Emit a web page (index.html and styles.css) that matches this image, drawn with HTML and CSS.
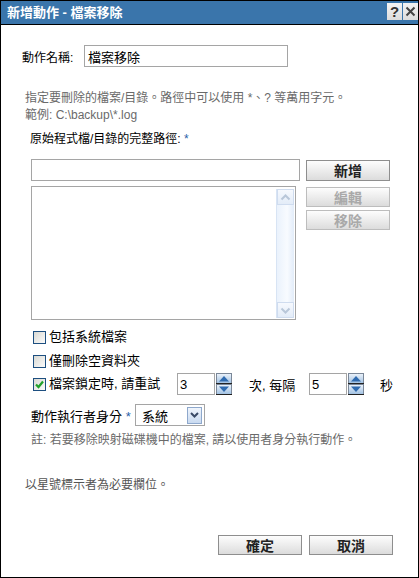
FILE: index.html
```html
<!DOCTYPE html>
<html lang="zh-Hant">
<head>
  <meta charset="UTF-8" />
  <title>新增動作 - 檔案移除</title>
  <link rel="stylesheet" href="styles.css">
</head>
<body>

  <div class="dialog">
    <div class="titlebar">
      <span class="title">新增動作 - 檔案移除</span>
      <div class="title-btns">
        <span class="tbtn">?</span>
        <span class="tbtn">
          <svg width="11" height="11" viewBox="0 0 11 11"><path d="M1.5 1.5 L9.5 9.5 M9.5 1.5 L1.5 9.5" stroke="#444" stroke-width="2"/></svg>
        </span>
      </div>
    </div>

    <div class="content">
      <div class="name-row">
        <span class="name-label">動作名稱:</span>
        <input class="field name-field" type="text" value="檔案移除">
      </div>

      <p class="hint">指定要刪除的檔案/目錄。路徑中可以使用 *、? 等萬用字元。<br>範例: C:\backup\*.log</p>

      <div class="path-label">原始程式檔/目錄的完整路徑: <span class="req">*</span></div>

      <div class="path-row">
        <input class="field path-field" type="text">
        <button class="btn btn-add">新增</button>
      </div>

      <div class="list-row">
        <div class="listbox">
          <div class="list-items"></div>
          <div class="vscroll">
            <span class="sarrow">
              <svg width="11" height="7" viewBox="0 0 11 7"><path d="M1.5 5.5 L5.5 1.5 L9.5 5.5" fill="none" stroke="#b9c7d9" stroke-width="2"/></svg>
            </span>
            <span class="sarrow">
              <svg width="11" height="7" viewBox="0 0 11 7"><path d="M1.5 1.5 L5.5 5.5 L9.5 1.5" fill="none" stroke="#b9c7d9" stroke-width="2"/></svg>
            </span>
          </div>
        </div>
        <div class="side-btns">
          <button class="btn" disabled>編輯</button>
          <button class="btn" disabled>移除</button>
        </div>
      </div>

      <div class="check-row first">
        <span class="cb"></span><span class="cb-label">包括系統檔案</span>
      </div>
      <div class="check-row">
        <span class="cb"></span><span class="cb-label">僅刪除空資料夾</span>
      </div>
      <div class="check-row retry">
        <span class="cb checked">
          <svg width="11" height="11" viewBox="0 0 11 11"><path d="M2 5.5 L4.5 8 L9 2.5" fill="none" stroke="#22a12b" stroke-width="2.2"/></svg>
        </span>
        <span class="cb-label retry-label">檔案鎖定時, 請重試</span>
        <input class="field spin-field" type="text" value="3">
        <span class="spinner">
          <svg width="16" height="22" viewBox="0 0 16 22">
            <defs>
              <linearGradient id="sg" x1="0" y1="0" x2="0" y2="1">
                <stop offset="0" stop-color="#eef4fb"/>
                <stop offset="1" stop-color="#9fc0e2"/>
              </linearGradient>
            </defs>
            <rect x="0.5" y="0.5" width="15" height="10" fill="url(#sg)" stroke="#7a8798"/>
            <rect x="0.5" y="11.5" width="15" height="10" fill="url(#sg)" stroke="#7a8798"/>
            <path d="M3 8.5 L13 8.5 L8 3 Z" fill="#2f6bb0"/>
            <path d="M3 13.5 L13 13.5 L8 19 Z" fill="#2f6bb0"/>
            <path d="M0 10.5 H16 M0 21.5 H16" stroke="#222"/>
          </svg>
        </span>
        <span class="retry-mid">次, 每隔</span>
        <input class="field spin-field" type="text" value="5">
        <span class="spinner">
          <svg width="16" height="22" viewBox="0 0 16 22">
            <rect x="0.5" y="0.5" width="15" height="10" fill="url(#sg)" stroke="#7a8798"/>
            <rect x="0.5" y="11.5" width="15" height="10" fill="url(#sg)" stroke="#7a8798"/>
            <path d="M3 8.5 L13 8.5 L8 3 Z" fill="#2f6bb0"/>
            <path d="M3 13.5 L13 13.5 L8 19 Z" fill="#2f6bb0"/>
            <path d="M0 10.5 H16 M0 21.5 H16" stroke="#222"/>
          </svg>
        </span>
        <span class="retry-end">秒</span>
      </div>

      <div class="exec-row">
        <span class="exec-label">動作執行者身分 <span class="req">*</span></span>
        <div class="select">
          <span class="select-value">系統</span>
          <span class="select-arrow">
            <svg width="9" height="6" viewBox="0 0 9 6"><path d="M1 1 L4.5 4.5 L8 1" fill="none" stroke="#3a4a66" stroke-width="2"/></svg>
          </span>
        </div>
      </div>

      <p class="note">註: 若要移除映射磁碟機中的檔案, 請以使用者身分執行動作。</p>

      <p class="required">以星號標示者為必要欄位。</p>

      <div class="footer">
        <button class="btn">確定</button>
        <button class="btn">取消</button>
      </div>
    </div>
  </div>

</body>
</html>
```

FILE: styles.css
```css
body {
  margin: 0;
  font-family: "Liberation Sans", "Noto Sans CJK TC", sans-serif;
  font-size: 12px;
  color: #000;
  background: #fff;
}
.dialog {
  width: 419px;
  height: 578px;
  box-sizing: border-box;
  border: 1px solid #000;
  display: flex;
  flex-direction: column;
}
.titlebar {
  height: 23px;
  background: #3a75ab;
  border-bottom: 1px solid #000;
  display: flex;
  align-items: center;
  justify-content: space-between;
}
.title {
  color: #fff;
  font-weight: bold;
  font-size: 13px;
  padding-left: 6px;
  line-height: 23px;
}
.title-btns {
  display: flex;
  gap: 1px;
  align-self: flex-start;
  margin-top: 2px;
}
.tbtn {
  width: 15px;
  height: 17px;
  background: linear-gradient(#f4f4f4, #dcdcdc);
  color: #333;
  font-weight: bold;
  font-size: 15px;
  line-height: 17px;
  text-align: center;
  display: flex;
  align-items: center;
  justify-content: center;
}
.content {
  flex: 1;
  padding: 0 25px 0 21px;
  display: flex;
  flex-direction: column;
}
.field {
  box-sizing: border-box;
  height: 22px;
  border: 1px solid #a5a5a5;
  padding: 0 3px;
  font-family: "Liberation Sans", "Noto Sans CJK TC", sans-serif;
  font-size: 13px;
  color: #000;
  background: #fff;
  outline: none;
  margin: 0;
}
.name-row {
  margin-top: 20px;
  display: flex;
  align-items: center;
}
.name-label {
  width: 62px;
}
.name-field {
  width: 204px;
}
.hint {
  margin: 23px 0 0 3px;
  line-height: 17px;
  color: #6a6a6a;
}
.path-label {
  margin: 7px 0 0 8px;
  line-height: 17px;
}
.req {
  color: #2a5fa8;
}
.path-row,
.list-row {
  margin-left: 9px;
  display: grid;
  grid-template-columns: 275px 84px;
  align-items: start;
}
.path-row {
  margin-top: 11px;
}
.path-field {
  width: 269px;
}
.btn {
  width: 84px;
  height: 21px;
  border: 1px solid #8e8e8e;
  background: linear-gradient(#fdfdfd, #dcdcdc);
  font-family: "Noto Sans CJK TC", sans-serif;
  font-weight: bold;
  font-size: 14px;
  line-height: 19px;
  color: #222;
  padding: 0;
}
.btn:disabled {
  color: #a9a9a9;
  border-color: #bdbdbd;
  height: 20px;
  line-height: 18px;
}
.btn-add {
  margin-top: 1px;
}
.list-row {
  margin-top: 5px;
}
.listbox {
  width: 265px;
  height: 134px;
  box-sizing: border-box;
  border: 1px solid #a5a5a5;
  display: flex;
  padding: 2px 1px 1px 0;
}
.list-items {
  flex: 1;
}
.vscroll {
  width: 17px;
  background: linear-gradient(90deg, #eaf2fc, #f8fbff 60%, #e2ecf9);
  border-left: 1px solid #d8e4f4;
  display: flex;
  flex-direction: column;
  justify-content: space-between;
}
.sarrow {
  height: 16px;
  box-sizing: border-box;
  border: 1px solid #cfdcef;
  background: linear-gradient(#f6f9fe, #e3ecf8);
  display: flex;
  align-items: center;
  justify-content: center;
}
.side-btns {
  display: flex;
  flex-direction: column;
  gap: 3px;
  margin-top: 1px;
}
.check-row {
  display: flex;
  align-items: center;
  margin: 6px 0 0 11px;
  height: 18px;
}
.check-row.first {
  margin-top: 8px;
}
.check-row.retry {
  margin-top: 3px;
  height: 22px;
}
.cb {
  width: 13px;
  height: 13px;
  box-sizing: border-box;
  border: 1px solid #1d4f80;
  background: linear-gradient(135deg, #d9d9d3, #fbfbfb);
  margin-right: 3px;
  display: flex;
  align-items: center;
  justify-content: center;
}
.cb-label {
  font-size: 13px;
  line-height: 18px;
}
.retry-label {
  width: 130px;
}
.spin-field {
  width: 38px;
  padding: 0 2px;
  font-size: 13px;
}
.spinner {
  margin-left: 1px;
  display: flex;
}
.retry-mid {
  margin-left: 17px;
  width: 61px;
  font-size: 13px;
}
.retry-end {
  margin-left: 16px;
  font-size: 13px;
}
.exec-row {
  margin: 9px 0 0 9px;
  display: flex;
  align-items: center;
}
.exec-label {
  width: 104px;
  font-size: 13px;
}
.select {
  width: 70px;
  height: 22px;
  box-sizing: border-box;
  border: 1px solid #a5a5a5;
  display: flex;
  align-items: center;
  justify-content: space-between;
  padding: 0 2px 0 6px;
}
.select-value {
  font-size: 13px;
}
.select-arrow {
  width: 15px;
  height: 17px;
  box-sizing: border-box;
  border: 1px solid #8ea8cc;
  background: linear-gradient(#f0f5fc, #c9daf0);
  display: flex;
  align-items: center;
  justify-content: center;
}
.note {
  margin: 6px 0 0 9px;
  line-height: 17px;
  color: #6a6a6a;
}
.required {
  margin: 28px 0 0 3px;
  line-height: 17px;
  color: #555;
}
.footer {
  margin-top: 41px;
  display: flex;
  justify-content: flex-end;
  gap: 7px;
}
.footer .btn {
  height: 20px;
  line-height: 18px;
}
```
